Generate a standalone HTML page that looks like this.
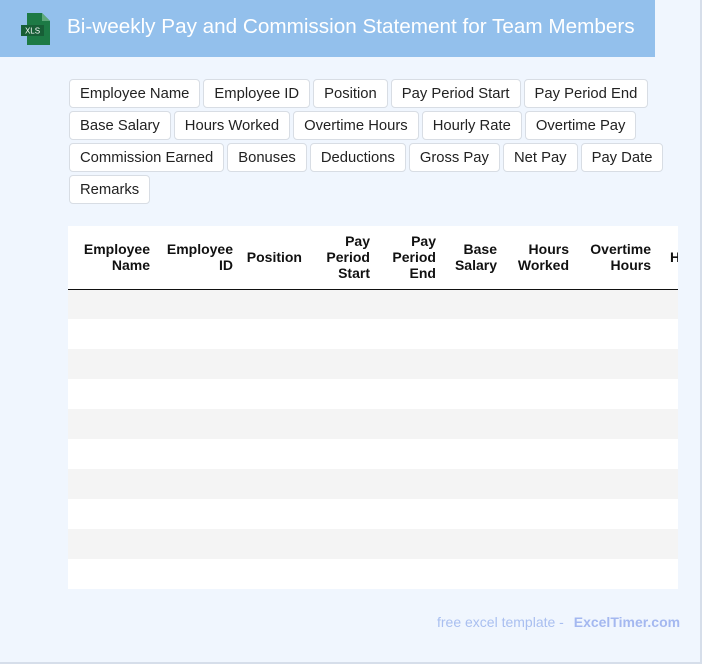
<!DOCTYPE html>
<html><head><meta charset="utf-8"><style>
*{margin:0;padding:0;box-sizing:border-box}
body{width:702px;height:664px;background:#f0f6fe;font-family:"Liberation Sans",Arial,sans-serif;position:relative;overflow:hidden}
.frame{position:absolute;left:0;top:0;width:702px;height:664px;border-right:2px solid #d6deea;border-bottom:2px solid #d6deea}
.hdr{position:absolute;left:0;top:0;width:655px;height:57px;background:#93c0ec}
.hdr h1{position:absolute;left:67px;top:15px;font-size:20.7px;font-weight:normal;color:#fff;white-space:nowrap}
.icon{position:absolute;left:21px;top:13px}
.tags{position:absolute;left:69px;top:79px;width:600px}
.tag{display:inline-block;height:29px;line-height:28px;padding:0 10px;border:1px solid #d8dde4;border-radius:4px;background:#fff;font-size:14.8px;color:#222;margin:0 3px 3px 0;vertical-align:top}
.tw{position:absolute;left:68px;top:226px;width:610px;height:363px;overflow:hidden;background:#fff}
table{border-collapse:collapse;table-layout:fixed;width:800px}
th{height:63px;font-size:14px;font-weight:bold;text-align:right;padding:0 10px 0 0;vertical-align:middle;line-height:16px;border-bottom:1px solid #111;color:#111}
td{height:30px}
tr:nth-child(odd) td{background:#f4f4f4}
.ft{position:absolute;left:437px;top:614px;font-size:14px;color:#a9bff0}
.ft b{color:#a4b8f0;margin-left:6px}
</style></head><body>
<div class="frame"></div>
<div class="hdr">
<svg class="icon" width="30" height="32" viewBox="0 0 30 32"><path d="M6 0h15l8 8v24H6z" fill="#1d7a45"/><path d="M21 0v8h8z" fill="#5fa97c"/><rect x="0" y="12" width="23" height="11" fill="#175e36"/><text x="11.5" y="20.5" font-size="8" fill="#fff" text-anchor="middle" font-family="Liberation Sans">XLS</text></svg>
<h1>Bi-weekly Pay and Commission Statement for Team Members</h1>
</div>
<div class="tags">
<span class="tag">Employee Name</span><span class="tag">Employee ID</span><span class="tag">Position</span><span class="tag">Pay Period Start</span><span class="tag">Pay Period End</span><span class="tag">Base Salary</span><span class="tag">Hours Worked</span><span class="tag">Overtime Hours</span><span class="tag">Hourly Rate</span><span class="tag">Overtime Pay</span><span class="tag">Commission Earned</span><span class="tag">Bonuses</span><span class="tag">Deductions</span><span class="tag">Gross Pay</span><span class="tag">Net Pay</span><span class="tag">Pay Date</span><span class="tag">Remarks</span>
</div>
<div class="tw"><table>
<colgroup><col style="width:92px"><col style="width:83px"><col style="width:69px"><col style="width:68px"><col style="width:66px"><col style="width:61px"><col style="width:72px"><col style="width:82px"><col style="width:207px"></colgroup>
<thead><tr><th>Employee Name</th><th>Employee ID</th><th>Position</th><th>Pay Period Start</th><th>Pay Period End</th><th>Base Salary</th><th>Hours Worked</th><th>Overtime Hours</th><th style="text-align:left;padding-left:9px">Hourly Rate</th></tr></thead>
<tbody>
<tr><td colspan="9"></td></tr><tr><td colspan="9"></td></tr><tr><td colspan="9"></td></tr><tr><td colspan="9"></td></tr><tr><td colspan="9"></td></tr><tr><td colspan="9"></td></tr><tr><td colspan="9"></td></tr><tr><td colspan="9"></td></tr><tr><td colspan="9"></td></tr><tr><td colspan="9"></td></tr>
</tbody></table></div>
<div class="ft">free excel template - <b>ExcelTimer.com</b></div>
</body></html>
